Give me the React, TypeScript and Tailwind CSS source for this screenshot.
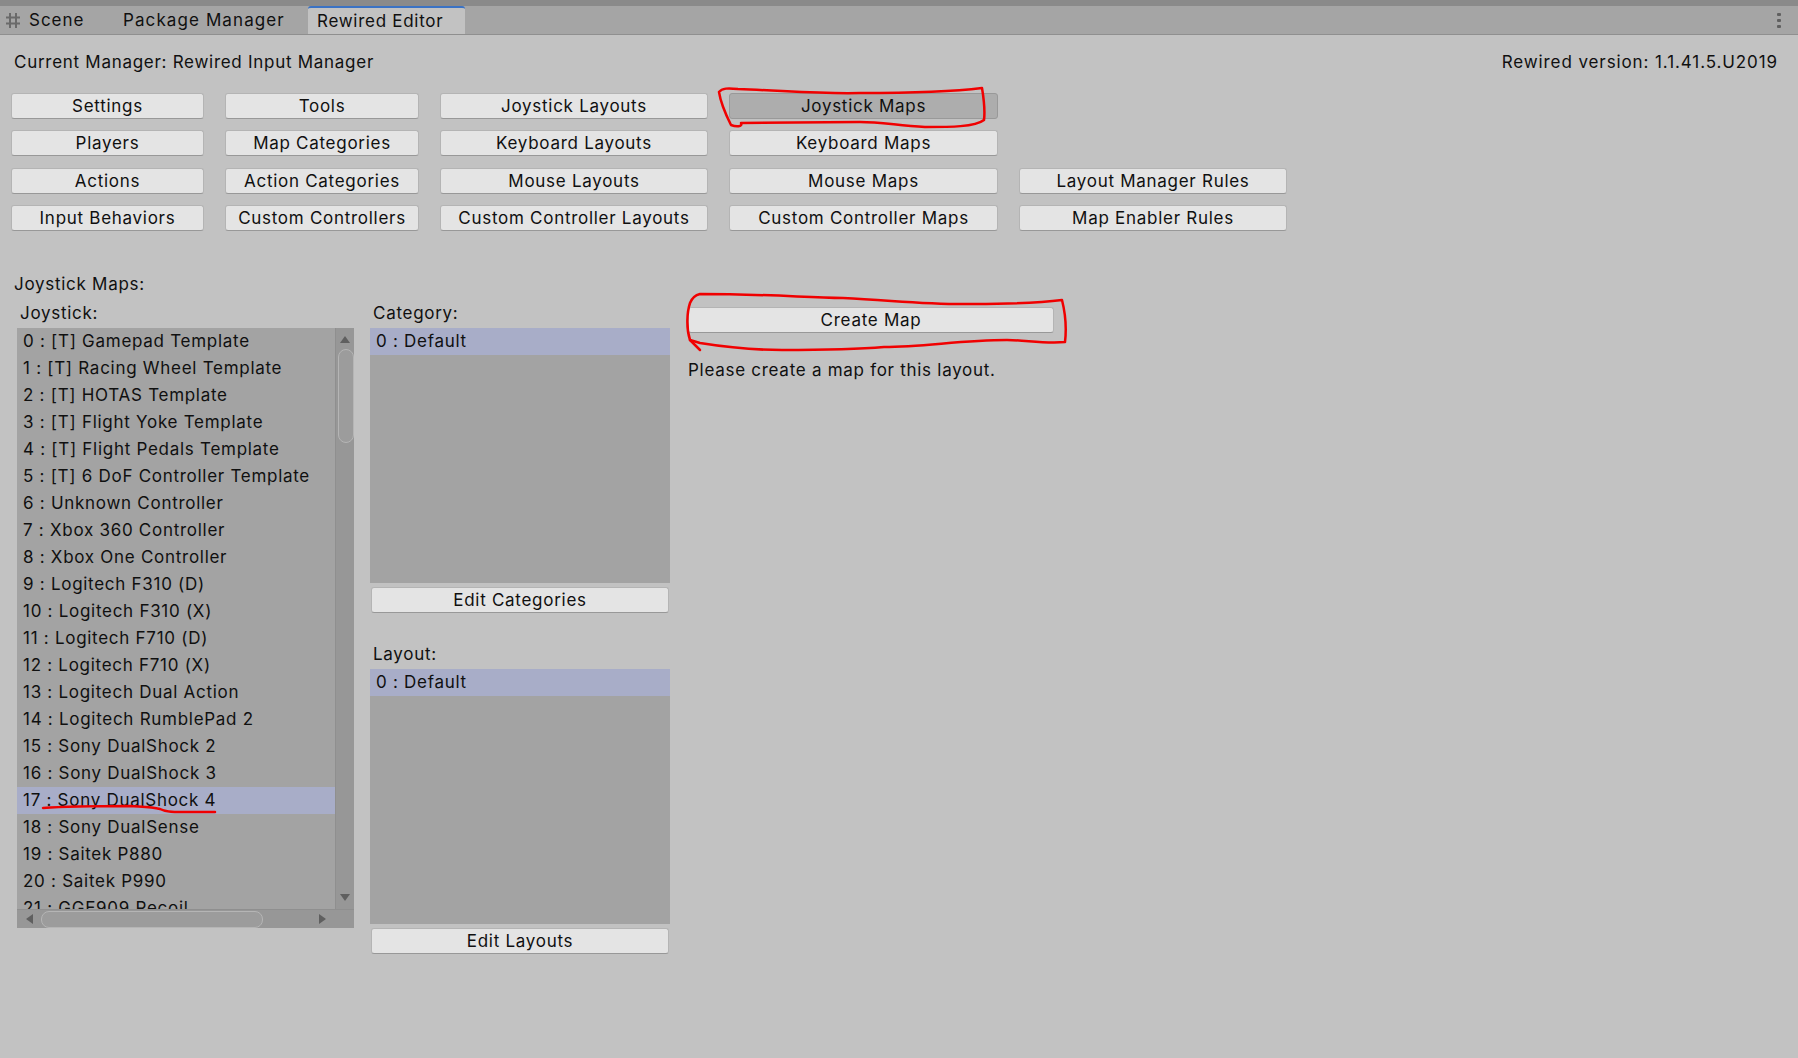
const joysticks = [
  "0 : [T] Gamepad Template",
  "1 : [T] Racing Wheel Template",
  "2 : [T] HOTAS Template",
  "3 : [T] Flight Yoke Template",
  "4 : [T] Flight Pedals Template",
  "5 : [T] 6 DoF Controller Template",
  "6 : Unknown Controller",
  "7 : Xbox 360 Controller",
  "8 : Xbox One Controller",
  "9 : Logitech F310 (D)",
  "10 : Logitech F310 (X)",
  "11 : Logitech F710 (D)",
  "12 : Logitech F710 (X)",
  "13 : Logitech Dual Action",
  "14 : Logitech RumblePad 2",
  "15 : Sony DualShock 2",
  "16 : Sony DualShock 3",
  "17 : Sony DualShock 4",
  "18 : Sony DualSense",
  "19 : Saitek P880",
  "20 : Saitek P990",
  "21 : GGE909 Recoil",
];

const menu: (string | null)[] = [
  "Settings", "Tools", "Joystick Layouts", "Joystick Maps", null,
  "Players", "Map Categories", "Keyboard Layouts", "Keyboard Maps", null,
  "Actions", "Action Categories", "Mouse Layouts", "Mouse Maps", "Layout Manager Rules",
  "Input Behaviors", "Custom Controllers", "Custom Controller Layouts", "Custom Controller Maps", "Map Enabler Rules",
];

const EditorButton = ({ label, active, className }: { label: string; active?: boolean; className?: string }) => (
  <button
    className={`h-[26px] rounded-[3px] border flex items-center justify-center pt-[1px] ${
      active ? "bg-[#adadad] border-[#999999]" : "bg-[#e4e4e4] border-[#b4b4b4] border-b-[#989898]"
    } ${className ?? ""}`}
  >
    {label}
  </button>
);

const ListRow = ({ label, selected }: { label: string; selected?: boolean }) => (
  <div className={`h-[27px] shrink-0 pl-[6px] leading-[27px] whitespace-nowrap ${selected ? "bg-[#a8adc8]" : ""}`}>
    {label}
  </div>
);

const Annotations = () => (
  <svg className="absolute left-0 top-0 pointer-events-none" width="1798" height="1058" fill="none" stroke="#f00000" strokeWidth="2.5" strokeLinecap="round" strokeLinejoin="round">
    <path d="M719 92C722 88 728 88 738 89C790 91 820 94 860 93C900 93 950 92 982 88C984 100 985 112 984 120C975 127 950 127 925 127C895 125 880 122 860 122C820 122 780 123 741 123C743 127 736 127 731 125C726 115 721 105 719 92Z" />
    <path d="M700 294C760 294 800 297 843 298C900 301 930 305 974 304C1005 304 1040 303 1062 300C1065 312 1067 325 1065 342C1045 344 1025 340 1007 340C960 340 925 347 884 347C850 350 815 350 782 350C750 350 725 347 700 343L690 340C686 328 687 312 690 303C692 298 696 295 700 294Z" />
    <path d="M690 340L700 350" />
    <path d="M43 808C70 806 100 806 130 806C145 807 152 807 160 809C168 813 178 812 190 812C200 812 208 812 215 812" />
  </svg>
);

export default function App() {
  return (
    <div className="relative w-[1798px] h-[1058px] overflow-hidden bg-[#c2c2c2] text-[17px] tracking-[0.72px] text-[#101010] font-['Inter',sans-serif]">
      {/* tab strip */}
      <div className="h-[35px] bg-[#8a8a8a] pt-[6px]">
        <div className="h-[29px] flex items-stretch bg-[#a5a5a5] border-b border-[#8f8f8f] leading-[27px]">
          <div className="w-[123px] flex items-center pl-[6px] gap-[9px]">
            <svg width="14" height="15" viewBox="0 0 14 15" stroke="#6a6a6a" strokeWidth="2">
              <path d="M4 0V15M10 0V15M0 4.5H14M0 10.5H14" />
            </svg>
            <span className="tracking-[1px]">Scene</span>
          </div>
          <div className="w-[185px] flex items-center tracking-[1.1px]">Package Manager</div>
          <div className="w-[157px] flex items-center pl-[9px] bg-[#c2c2c2] border-t-2 border-[#3a72c4] rounded-t-[3px]">Rewired Editor</div>
          <div className="ml-auto pr-[17px] flex flex-col justify-center gap-[3px]">
            <span className="w-[4px] h-[3px] rounded-[1px] bg-[#606060]" />
            <span className="w-[4px] h-[3px] rounded-[1px] bg-[#606060]" />
            <span className="w-[4px] h-[3px] rounded-[1px] bg-[#606060]" />
          </div>
        </div>
      </div>

      <div className="flex justify-between pl-[14px] pr-[20px] pt-[16px] h-[58px] leading-[22px]">
        <span>Current Manager: Rewired Input Manager</span>
        <span className="tracking-[0.9px]">Rewired version: 1.1.41.5.U2019</span>
      </div>

      <div className="pl-[11px] grid grid-cols-[193px_194px_268px_269px_268px] gap-x-[21px] gap-y-[11.4px]">
        {menu.map((label, i) =>
          label ? <EditorButton key={label} label={label} active={label === "Joystick Maps"} /> : <div key={i} />
        )}
      </div>

      <div className="pl-[14px] mt-[42px] h-[22px] leading-[22px]">Joystick Maps:</div>

      <div className="flex mt-[7px] pl-[17px]">
        <div className="w-[337px]">
          <div className="pl-[3px] h-[22px] leading-[22px]">Joystick:</div>
          <div className="mt-[4px] h-[600px] bg-[#a3a3a3] flex flex-col">
            <div className="flex h-[581px]">
              <div className="flex-1 flex flex-col overflow-hidden">
                {joysticks.map((j) => (
                  <ListRow key={j} label={j} selected={j.startsWith("17 ")} />
                ))}
              </div>
              <div className="w-[19px] bg-[#979797] border-l border-[#8f8f8f] flex flex-col items-center pt-[6px]">
                <svg width="12" height="10" viewBox="0 0 12 10"><path d="M1 9L6 2L11 9Z" fill="#5f5f5f" /></svg>
                <div className="mt-[5px] w-[16px] h-[94px] ml-[2px] rounded-[8px] border border-[#b5b5b5] bg-[#9c9c9c]" />
                <svg className="mt-auto mb-[6px]" width="12" height="10" viewBox="0 0 12 10"><path d="M1 1L6 8L11 1Z" fill="#5f5f5f" /></svg>
              </div>
            </div>
            <div className="h-[19px] bg-[#979797] border-t border-[#8f8f8f] flex items-center pl-[7px] pr-[26px]">
              <svg width="10" height="12" viewBox="0 0 10 12"><path d="M9 1L2 6L9 11Z" fill="#5f5f5f" /></svg>
              <div className="ml-[7px] w-[222px] h-[17px] rounded-[8px] border border-[#b5b5b5] bg-[#9c9c9c]" />
              <svg className="ml-auto" width="10" height="12" viewBox="0 0 10 12"><path d="M1 1L8 6L1 11Z" fill="#5f5f5f" /></svg>
            </div>
          </div>
        </div>

        <div className="ml-[16px] w-[300px]">
          <div className="pl-[3px] h-[22px] leading-[22px]">Category:</div>
          <div className="mt-[4px] h-[255px] bg-[#a3a3a3]">
            <ListRow label="0 : Default" selected />
          </div>
          <EditorButton label="Edit Categories" className="mt-[4px] w-[298px] mx-[1px]" />
          <div className="pl-[3px] mt-[30px] h-[22px] leading-[22px]">Layout:</div>
          <div className="mt-[4px] h-[255px] bg-[#a3a3a3]">
            <ListRow label="0 : Default" selected />
          </div>
          <EditorButton label="Edit Layouts" className="mt-[4px] w-[298px] mx-[1px]" />
        </div>

        <div className="ml-[18px] mt-[5px]">
          <EditorButton label="Create Map" className="w-[366px]" />
          <div className="mt-[26px] h-[22px] leading-[22px]">Please create a map for this layout.</div>
        </div>
      </div>

      <Annotations />
    </div>
  );
}
